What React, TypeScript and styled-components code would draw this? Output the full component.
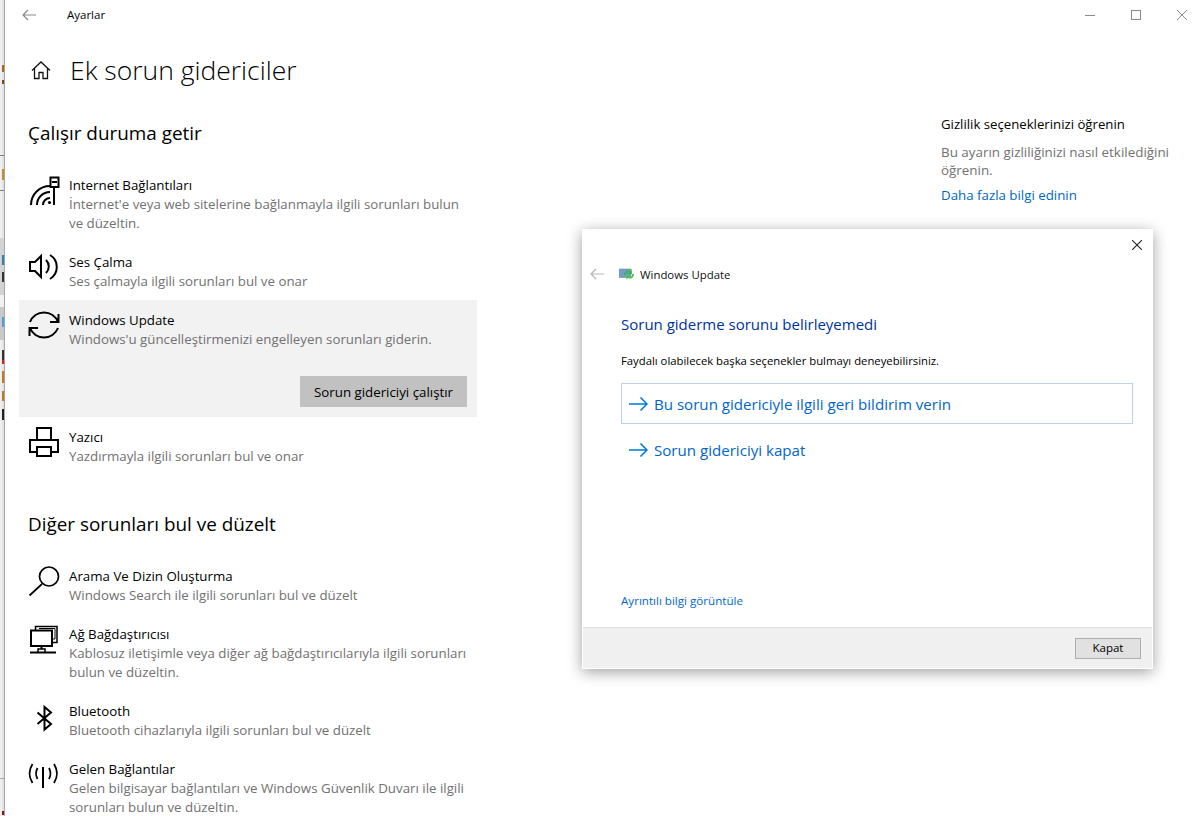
import React from 'react';
import styled, { createGlobalStyle } from 'styled-components';

const GlobalStyle = createGlobalStyle`
  html, body {
    margin: 0;
    padding: 0;
    background: #fff;
  }
  body {
    font-family: "Open Sans", "Noto Sans", "Liberation Sans", sans-serif;
    color: #000;
  }
`;

const Desktop = styled.div`
  position: relative;
  display: flex;
  width: 1202px;
  height: 816px;
  overflow: hidden;
  background: #fff;
`;

/* sliver of the window lying behind the settings window */
const BehindStrip = styled.div`
  flex: 0 0 4px;
  display: flex;
  flex-direction: column;
  overflow: hidden;
  border-right: 1px solid #a6a6a6;
  background: linear-gradient(90deg, #f4f4f4, #dedede);
`;

const StripSlice = styled.div<{ $h: number; $bg?: string }>`
  flex: 0 0 ${p => p.$h}px;
  display: flex;
  justify-content: flex-end;
  background: ${p => p.$bg || 'transparent'};
`;

const StripMark = styled.span<{ $color: string }>`
  width: 2px;
  background: ${p => p.$color};
`;

const SettingsWindow = styled.div`
  flex: 1;
  display: flex;
  flex-direction: column;
  min-width: 0;
`;

const TitleBar = styled.div`
  display: flex;
  align-items: center;
  height: 30px;
  padding-left: 17px;
  margin-right: -3px;
  font-size: 11.5px;
`;

const TitleText = styled.span`
  margin-left: 31px;
  flex: 1;
  margin-top: -1px;
`;

const WinButton = styled.div`
  display: flex;
  align-items: center;
  justify-content: center;
  width: 46px;
  height: 30px;
`;

const Main = styled.div`
  display: flex;
`;

const LeftColumn = styled.main`
  flex: 0 0 936px;
`;

const PageHeading = styled.div`
  display: flex;
  align-items: center;
  gap: 19px;
  height: 46px;
  margin-top: 17px;
  padding-left: 26px;
`;

const PageTitle = styled.h1`
  margin: 0;
  font-size: 26.5px;
  font-weight: 300;
  line-height: 46px;
`;

const SectionTitle = styled.h2<{ $gap: number }>`
  margin: ${p => p.$gap}px 0 18px 23px;
  font-size: 18.9px;
  font-weight: 400;
  line-height: 28px;
`;

const RowList = styled.div`
  display: flex;
  flex-direction: column;
  width: 458px;
  margin-left: 14px;
`;

const Row = styled.div<{ $active?: boolean }>`
  display: flex;
  flex-wrap: wrap;
  padding: 10px 10px 9px;
  background: ${p => (p.$active ? '#f2f2f2' : 'transparent')};
`;

const IconSlot = styled.div`
  flex: 0 0 30px;
  height: 30px;
  margin-right: 10px;

  svg {
    display: block;
    overflow: visible;
  }
`;

const RowText = styled.div`
  flex: 1;
  min-width: 0;
`;

const RowTitle = styled.div`
  font-size: 13.3px;
  line-height: 20px;
`;

const RowSub = styled.div`
  font-size: 13.3px;
  line-height: 19px;
  color: #717171;
  white-space: pre;
`;

const RowActions = styled.div`
  flex: 0 0 100%;
  display: flex;
  justify-content: flex-end;
  margin: 27px 0 1px;
`;

const RunButton = styled.button`
  width: 167px;
  height: 31px;
  border: 0;
  padding: 0;
  background: #c1c1c1;
  color: #000;
  font: inherit;
  font-size: 13.3px;
`;

const SidePanel = styled.aside`
  padding-top: 84px;
  width: 240px;
`;

const SideTitle = styled.div`
  font-size: 13.2px;
  line-height: 20px;
  margin-bottom: 9px;
`;

const SideText = styled.div`
  font-size: 13.4px;
  line-height: 18px;
  color: #717171;
  margin-bottom: 6px;
  white-space: pre-line;
`;

const SideLink = styled.a`
  display: block;
  font-size: 13.3px;
  line-height: 20px;
  color: #0067c0;
`;

/* troubleshooter window floating above settings */
const Dialog = styled.div`
  position: absolute;
  left: 582px;
  top: 229px;
  width: 571px;
  height: 440px;
  box-sizing: border-box;
  display: flex;
  flex-direction: column;
  border: 1px solid #fff;
  background: #fff;
  box-shadow: 0 3px 14px rgba(0, 0, 0, 0.38);
`;

const DialogTop = styled.div`
  display: flex;
  justify-content: flex-end;
  align-items: center;
  height: 29px;
  padding-right: 10px;
`;

const DialogNav = styled.div`
  display: flex;
  align-items: center;
  height: 30px;
  padding-left: 7px;
  font-size: 11.4px;
  color: #111;
`;

const NavIcon = styled.span`
  display: flex;
  margin: 0 5px 0 15px;
`;

const DialogBody = styled.div`
  flex: 1;
  display: flex;
  flex-direction: column;
  padding: 24px 19px 18px 38px;
`;

const DialogTitle = styled.div`
  font-size: 15px;
  line-height: 22px;
  color: #003399;
`;

const DialogText = styled.div`
  font-size: 11.3px;
  line-height: 16px;
  margin: 18px 0 14px;
`;

const CommandLink = styled.div<{ $focused?: boolean }>`
  display: flex;
  align-items: center;
  gap: 6px;
  height: 41px;
  box-sizing: border-box;
  padding: 1px 0 0 7px;
  margin-bottom: 5px;
  border: 1px solid ${p => (p.$focused ? '#bcd3e6' : 'transparent')};
  font-size: 15.1px;
  color: #0066cc;
`;

const DetailsLink = styled.a`
  margin-top: auto;
  font-size: 11.6px;
  line-height: 16px;
  color: #0066cc;
`;

const DialogFooter = styled.div`
  display: flex;
  justify-content: flex-end;
  align-items: center;
  height: 41px;
  box-sizing: border-box;
  padding-right: 11px;
  border-top: 1px solid #dfdfdf;
  background: #f0f0f0;
`;

const CloseButton = styled.button`
  width: 66px;
  height: 21px;
  padding: 0 0 1px;
  border: 1px solid #adadad;
  background: #e1e1e1;
  color: #000;
  font: inherit;
  font-size: 11.5px;
`;

const line = { fill: 'none', stroke: '#000', strokeWidth: 2 };

const InternetIcon = () => (
  <svg width="30" height="30" viewBox="0 0 30 30" {...line}>
    <path d="M2 30A19 19 0 0 1 21 11M8 30A13 13 0 0 1 21 17M14 30A7 7 0 0 1 21 23" />
    <circle cx="20.5" cy="27.5" r="1.6" fill="#000" stroke="none" />
    <path d="M25 12V30" />
    <rect x="21.5" y="2.5" width="8" height="9.5" />
    <path d="M23 7h5" />
  </svg>
);

const SpeakerIcon = () => (
  <svg width="30" height="30" viewBox="0 0 30 30" {...line}>
    <path d="M1 10H6L12 4V25L6 19H1Z" />
    <path d="M17 8A9 9 0 0 1 17 21M21 3A14 14 0 0 1 21 27" />
  </svg>
);

const SyncIcon = () => (
  <svg width="30" height="30" viewBox="0 0 30 30" {...line}>
    <path d="M1 12A15 15 0 0 1 29 12M21 12H29.500V4" />
    <path d="M29 18A15 15 0 0 1 1 18M9 18H.5V26" />
  </svg>
);

const PrinterIcon = () => (
  <svg width="30" height="30" viewBox="0 0 30 30" {...line}>
    <path d="M8 13V1H22V13" />
    <path d="M8 25H1V13H29V25H22" />
    <rect x="8" y="20" width="14" height="9" />
  </svg>
);

const SearchIcon = () => (
  <svg width="30" height="30" viewBox="0 0 30 30" {...line}>
    <circle cx="20" cy="10.500" r="9.500" strokeWidth="1.700" />
    <path d="M13 18L.5 29.500" strokeWidth="1.700" />
  </svg>
);

const NetworkIcon = () => (
  <svg width="30" height="30" viewBox="0 0 30 30" {...line}>
    <path d="M6.500 6V2.500H28V18.500H23.500" strokeWidth="1.500" />
    <path d="M10 4.500H26V15H23.500" strokeWidth="1" />
    <rect x="2" y="6.500" width="21" height="15.500" />
    <path d="M12.500 22V25M1 28.500H27" />
    <path d="M9 28V25H16V28" strokeWidth="1.500" />
  </svg>
);

const BluetoothIcon = () => (
  <svg width="30" height="30" viewBox="0 0 30 30" {...line}>
    <path d="M8.500 11.500L22 23L15.500 28.500V6L22 11.500L8.500 23" />
  </svg>
);

const IncomingIcon = () => (
  <svg width="30" height="30" viewBox="0 0 30 30" {...line}>
    <path d="M14 8V29" />
    <path d="M3.500 5Q-2.500 14.500 3.500 24M25 5Q31 14.500 25 24" strokeWidth="1.800" />
    <path d="M8.500 9Q5.500 14.500 8.500 20M20 9Q23 14.500 20 20" strokeWidth="1.800" />
  </svg>
);

const HomeIcon = () => (
  <svg width="20" height="20" viewBox="0 0 20 20" fill="none" stroke="#111" strokeWidth="1.300">
    <path d="M1 10.500L10 2L19 10.500" />
    <path d="M3.500 8.500V18.500H8V12.500H12V18.500H16.500V8.500" />
  </svg>
);

const BackArrow = ({ color }: { color: string }) => (
  <svg width="14" height="12" viewBox="0 0 14 12" fill="none" stroke={color} strokeWidth="1.200">
    <path d="M14 6H1M6 1L1 6L6 11" />
  </svg>
);

const BlueArrow = () => (
  <svg width="19" height="14" viewBox="0 0 19 14" fill="none" stroke="#0078d7" strokeWidth="1.500">
    <path d="M0 7H18M11.500 .5L18 7L11.500 13.500" />
  </svg>
);

const UpdateIcon = () => (
  <svg width="16" height="12" viewBox="0 0 16 12">
    <rect x="0" y="1" width="12" height="8" fill="#6f9fc8" stroke="#7d8c99" strokeWidth=".6" />
    <rect x="0" y="9" width="12" height="1" fill="#9aa5ad" />
    <path d="M5 7A4 4 0 0 1 11 3L12.500 1.500L13 6H8.500L10 4.500A2.300 2.300 0 0 0 7 7Z" fill="#39b54a" />
    <path d="M15 6A4 4 0 0 1 9 10L7.500 11.500L7 7.500H11.500L10 9A2.300 2.300 0 0 0 13 6Z" fill="#4cc24a" />
  </svg>
);

const iconStroke = { fill: 'none', stroke: '#8a8a8a', strokeWidth: 1 };

const bandA = '#d3d3d3';
const bandB = '#c9c9c9';
const rule = '#808080';

const stripSlices: { h: number; bg?: string; mark?: string }[] = [
  { h: 65 },
  { h: 7, mark: '#a5671e' },
  { h: 8 },
  { h: 4, mark: '#7a4a10' },
  { h: 71 },
  { h: 1, bg: rule },
  { h: 13 },
  { h: 11, mark: '#c98a2a' },
  { h: 10 },
  { h: 1, bg: rule },
  { h: 47 },
  { h: 17, bg: bandA },
  { h: 10, bg: bandA, mark: '#2f7fb5' },
  { h: 7, bg: bandA },
  { h: 10, bg: bandA, mark: '#333333' },
  { h: 13, bg: bandA },
  { h: 12, bg: '#f2f2f2' },
  { h: 10, bg: bandB },
  { h: 10, bg: bandB, mark: '#4aa0d8' },
  { h: 13, bg: bandB },
  { h: 10 },
  { h: 10, mark: '#333333' },
  { h: 4, mark: '#d02020' },
  { h: 7 },
  { h: 12, mark: '#c8761c' },
  { h: 8 },
  { h: 10, mark: '#c8761c' },
  { h: 8 },
  { h: 11, mark: '#222222' },
  { h: 358 },
  { h: 1, bg: '#aaaaaa' },
  { h: 32 },
  { h: 4, mark: '#8a1010' },
  { h: 1 },
];

type Item = { icon: React.ReactNode; title: string; sub: string; active?: boolean };

const firstGroup: Item[] = [
  {
    icon: <InternetIcon />,
    title: 'Internet Bağlantıları',
    sub: "İnternet'e veya web sitelerine bağlanmayla ilgili sorunları bulun\nve düzeltin.",
  },
  { icon: <SpeakerIcon />, title: 'Ses Çalma', sub: 'Ses çalmayla ilgili sorunları bul ve onar' },
  {
    icon: <SyncIcon />,
    title: 'Windows Update',
    sub: "Windows'u güncelleştirmenizi engelleyen sorunları giderin.",
    active: true,
  },
  { icon: <PrinterIcon />, title: 'Yazıcı', sub: 'Yazdırmayla ilgili sorunları bul ve onar' },
];

const secondGroup: Item[] = [
  { icon: <SearchIcon />, title: 'Arama Ve Dizin Oluşturma', sub: 'Windows Search ile ilgili sorunları bul ve düzelt' },
  {
    icon: <NetworkIcon />,
    title: 'Ağ Bağdaştırıcısı',
    sub: 'Kablosuz iletişimle veya diğer ağ bağdaştırıcılarıyla ilgili sorunları\nbulun ve düzeltin.',
  },
  { icon: <BluetoothIcon />, title: 'Bluetooth', sub: 'Bluetooth cihazlarıyla ilgili sorunları bul ve düzelt' },
  {
    icon: <IncomingIcon />,
    title: 'Gelen Bağlantılar',
    sub: 'Gelen bilgisayar bağlantıları ve Windows Güvenlik Duvarı ile ilgili\nsorunları bulun ve düzeltin.',
  },
];

const renderRows = (items: Item[]) =>
  items.map(item => (
    <Row key={item.title} $active={item.active}>
      <IconSlot>{item.icon}</IconSlot>
      <RowText>
        <RowTitle>{item.title}</RowTitle>
        <RowSub>{item.sub}</RowSub>
      </RowText>
      {item.active && (
        <RowActions>
          <RunButton>Sorun gidericiyi çalıştır</RunButton>
        </RowActions>
      )}
    </Row>
  ));

const App: React.FC = () => {
  return (
    <Desktop>
      <GlobalStyle />
      <BehindStrip>
        {stripSlices.map((s, i) => (
          <StripSlice key={i} $h={s.h} $bg={s.bg}>
            {s.mark && <StripMark $color={s.mark} />}
          </StripSlice>
        ))}
      </BehindStrip>

      <SettingsWindow>
        <TitleBar>
          <BackArrow color="#8a8a8a" />
          <TitleText>Ayarlar</TitleText>
          <WinButton>
            <svg width="10" height="10" viewBox="0 0 10 10" {...iconStroke}>
              <path d="M0 5.500H10" />
            </svg>
          </WinButton>
          <WinButton>
            <svg width="10" height="10" viewBox="0 0 10 10" {...iconStroke}>
              <rect x=".5" y=".5" width="9" height="9" />
            </svg>
          </WinButton>
          <WinButton>
            <svg width="10" height="10" viewBox="0 0 10 10" {...iconStroke}>
              <path d="M0 0L10 10M10 0L0 10" />
            </svg>
          </WinButton>
        </TitleBar>

        <Main>
          <LeftColumn>
            <PageHeading>
              <HomeIcon />
              <PageTitle>Ek sorun gidericiler</PageTitle>
            </PageHeading>

            <SectionTitle $gap={26}>Çalışır duruma getir</SectionTitle>
            <RowList>{renderRows(firstGroup)}</RowList>

            <SectionTitle $gap={35}>Diğer sorunları bul ve düzelt</SectionTitle>
            <RowList>{renderRows(secondGroup)}</RowList>
          </LeftColumn>

          <SidePanel>
            <SideTitle>Gizlilik seçeneklerinizi öğrenin</SideTitle>
            <SideText>{'Bu ayarın gizliliğinizi nasıl etkilediğini\nöğrenin.'}</SideText>
            <SideLink>Daha fazla bilgi edinin</SideLink>
          </SidePanel>
        </Main>
      </SettingsWindow>

      <Dialog>
        <DialogTop>
          <svg width="10" height="10" viewBox="0 0 10 10" fill="none" stroke="#222" strokeWidth="1.100">
            <path d="M0 0L10 10M10 0L0 10" />
          </svg>
        </DialogTop>
        <DialogNav>
          <BackArrow color="#b5b5b5" />
          <NavIcon>
            <UpdateIcon />
          </NavIcon>
          Windows Update
        </DialogNav>
        <DialogBody>
          <DialogTitle>Sorun giderme sorunu belirleyemedi</DialogTitle>
          <DialogText>Faydalı olabilecek başka seçenekler bulmayı deneyebilirsiniz.</DialogText>
          <CommandLink $focused>
            <BlueArrow />
            Bu sorun gidericiyle ilgili geri bildirim verin
          </CommandLink>
          <CommandLink>
            <BlueArrow />
            Sorun gidericiyi kapat
          </CommandLink>
          <DetailsLink>Ayrıntılı bilgi görüntüle</DetailsLink>
        </DialogBody>
        <DialogFooter>
          <CloseButton>Kapat</CloseButton>
        </DialogFooter>
      </Dialog>
    </Desktop>
  );
};

export default App;
